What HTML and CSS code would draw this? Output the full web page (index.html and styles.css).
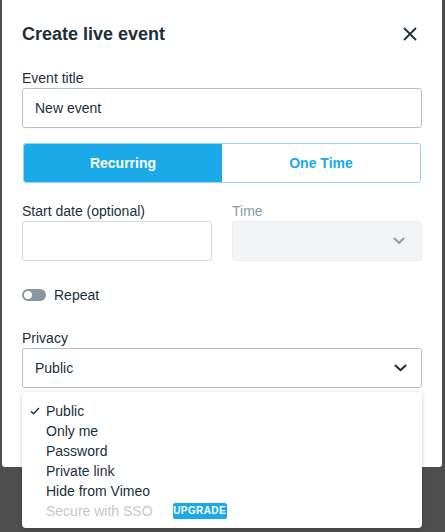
FILE: index.html
```html
<!DOCTYPE html>
<html>
<head>
<meta charset="utf-8">
<link rel="stylesheet" href="styles.css">
</head>
<body>
<div class="overlay">
  <div class="modal">
    <div class="header">
      <h1 class="title">Create live event</h1>
      <svg class="close" width="14" height="14" viewBox="0 0 14 14"><path d="M1.5 1.5L12.5 12.5M12.5 1.5L1.5 12.5" stroke="#1b2f3d" stroke-width="1.8" stroke-linecap="round" fill="none"/></svg>
    </div>

    <label class="label first">Event title</label>
    <div class="input"><span>New event</span></div>

    <div class="segmented">
      <div class="seg active">Recurring</div>
      <div class="seg">One Time</div>
    </div>

    <div class="row">
      <div class="col">
        <label class="label">Start date (optional)</label>
        <div class="input"></div>
      </div>
      <div class="col">
        <label class="label muted">Time</label>
        <div class="input disabled">
          <svg class="chev" width="12" height="8" viewBox="0 0 12 8"><path d="M1.5 1.5L6 6L10.5 1.5" stroke="#8b9aa5" stroke-width="1.8" fill="none" stroke-linecap="round" stroke-linejoin="round"/></svg>
        </div>
      </div>
    </div>

    <div class="toggle-row">
      <div class="toggle"><div class="knob"></div></div>
      <span>Repeat</span>
    </div>

    <label class="label privacy">Privacy</label>
    <div class="input select">
      <span>Public</span>
      <svg class="chev dark" width="13" height="8" viewBox="0 0 13 8"><path d="M1.5 1.5L6.5 6.2L11.5 1.5" stroke="#1b2f3d" stroke-width="2" fill="none" stroke-linecap="round" stroke-linejoin="round"/></svg>
    </div>
  </div>

  <ul class="menu">
    <li class="item"><svg class="check" width="10" height="8" viewBox="0 0 10 8"><path d="M1 4.2L3.6 6.8L9 1" stroke="#1b2f3d" stroke-width="1.3" fill="none"/></svg>Public</li>
    <li class="item">Only me</li>
    <li class="item">Password</li>
    <li class="item">Private link</li>
    <li class="item">Hide from Vimeo</li>
    <li class="item disabled-item">Secure with SSO <span class="badge">UPGRADE</span></li>
  </ul>
</div>
</body>
</html>
```

FILE: styles.css
```css
* { box-sizing: border-box; }
html, body {
  margin: 0;
  padding: 0;
  background: #4e4e4e;
  font-family: "Liberation Sans", Arial, sans-serif;
  color: #1b2f3d;
}
.overlay {
  position: relative;
  width: 445px;
  height: 532px;
  padding: 0 3px 0 2px;
}
.modal {
  background: #fff;
  width: 440px;
  height: 467px;
  padding: 20px 20px 0 20px;
  border-radius: 0 0 3px 3px;
}
.header {
  display: flex;
  justify-content: space-between;
  align-items: center;
  height: 28px;
}
.title {
  margin: 0;
  font-size: 18px;
  font-weight: bold;
  line-height: 28px;
  color: #1b2f3d;
}
.close { margin-right: 5px; margin-top: -1px; }
.label {
  display: block;
  font-size: 14px;
  line-height: 16px;
  height: 16px;
  margin-bottom: 2px;
  color: #1b2f3d;
}
.label.first { margin-top: 22px; }
.label.muted { color: #8b9aa5; }
.input {
  height: 40px;
  border: 1px solid #b7c2ca;
  border-radius: 3px;
  display: flex;
  align-items: center;
  padding: 0 12px;
  font-size: 14px;
  color: #1b2f3d;
}
.segmented {
  margin-top: 15px;
  height: 40px;
  display: flex;
  border: 1px solid #8fd5f4;
  border-radius: 3px;
  overflow: hidden;
  margin-left: 1px;
  margin-right: 1px;
}
.seg {
  flex: 1;
  display: flex;
  align-items: center;
  justify-content: center;
  font-size: 14px;
  font-weight: bold;
  color: #1aa9e9;
  background: #fff;
}
.seg.active {
  background: #1aa9e9;
  color: #fff;
}
.row {
  display: flex;
  gap: 20px;
  margin-top: 20px;
}
.col { flex: 1; }
.row .input { border-color: #d3d9de; }
.input.disabled {
  background: #f3f4f6;
  border-color: #eceef1;
  justify-content: flex-end;
}
.chev { margin-right: 4px; }
.toggle-row {
  display: flex;
  align-items: center;
  height: 20px;
  margin-top: 24px;
  font-size: 14px;
}
.toggle {
  width: 24px;
  height: 12px;
  border-radius: 6px;
  background: #8996a1;
  position: relative;
  margin-right: 8px;
}
.knob {
  position: absolute;
  left: 2px;
  top: 2px;
  width: 8px;
  height: 8px;
  border-radius: 50%;
  background: #fff;
}
.label.privacy { margin-top: 25px; }
.select {
  justify-content: space-between;
}
.chev.dark { margin-right: 2px; }
.menu {
  position: absolute;
  left: 22px;
  top: 392px;
  width: 400px;
  margin: 0;
  padding: 9px 0 7px 0;
  list-style: none;
  background: #fff;
  border-radius: 4px;
  box-shadow: 0 1px 4px rgba(0,0,0,0.2);
}
.item {
  position: relative;
  height: 20px;
  line-height: 20px;
  padding-left: 24px;
  font-size: 14px;
  color: #1b2f3d;
  display: flex;
  align-items: center;
}
.check {
  position: absolute;
  left: 8px;
  top: 6px;
}
.disabled-item { color: #c2cad1; }
.badge {
  display: inline-block;
  margin-left: 20px;
  width: 54px;
  height: 16px;
  line-height: 16px;
  background: #1aa9e9;
  color: #fff;
  font-size: 10px;
  font-weight: bold;
  text-align: center;
  border-radius: 2px;
  letter-spacing: 0.4px;
}
```
